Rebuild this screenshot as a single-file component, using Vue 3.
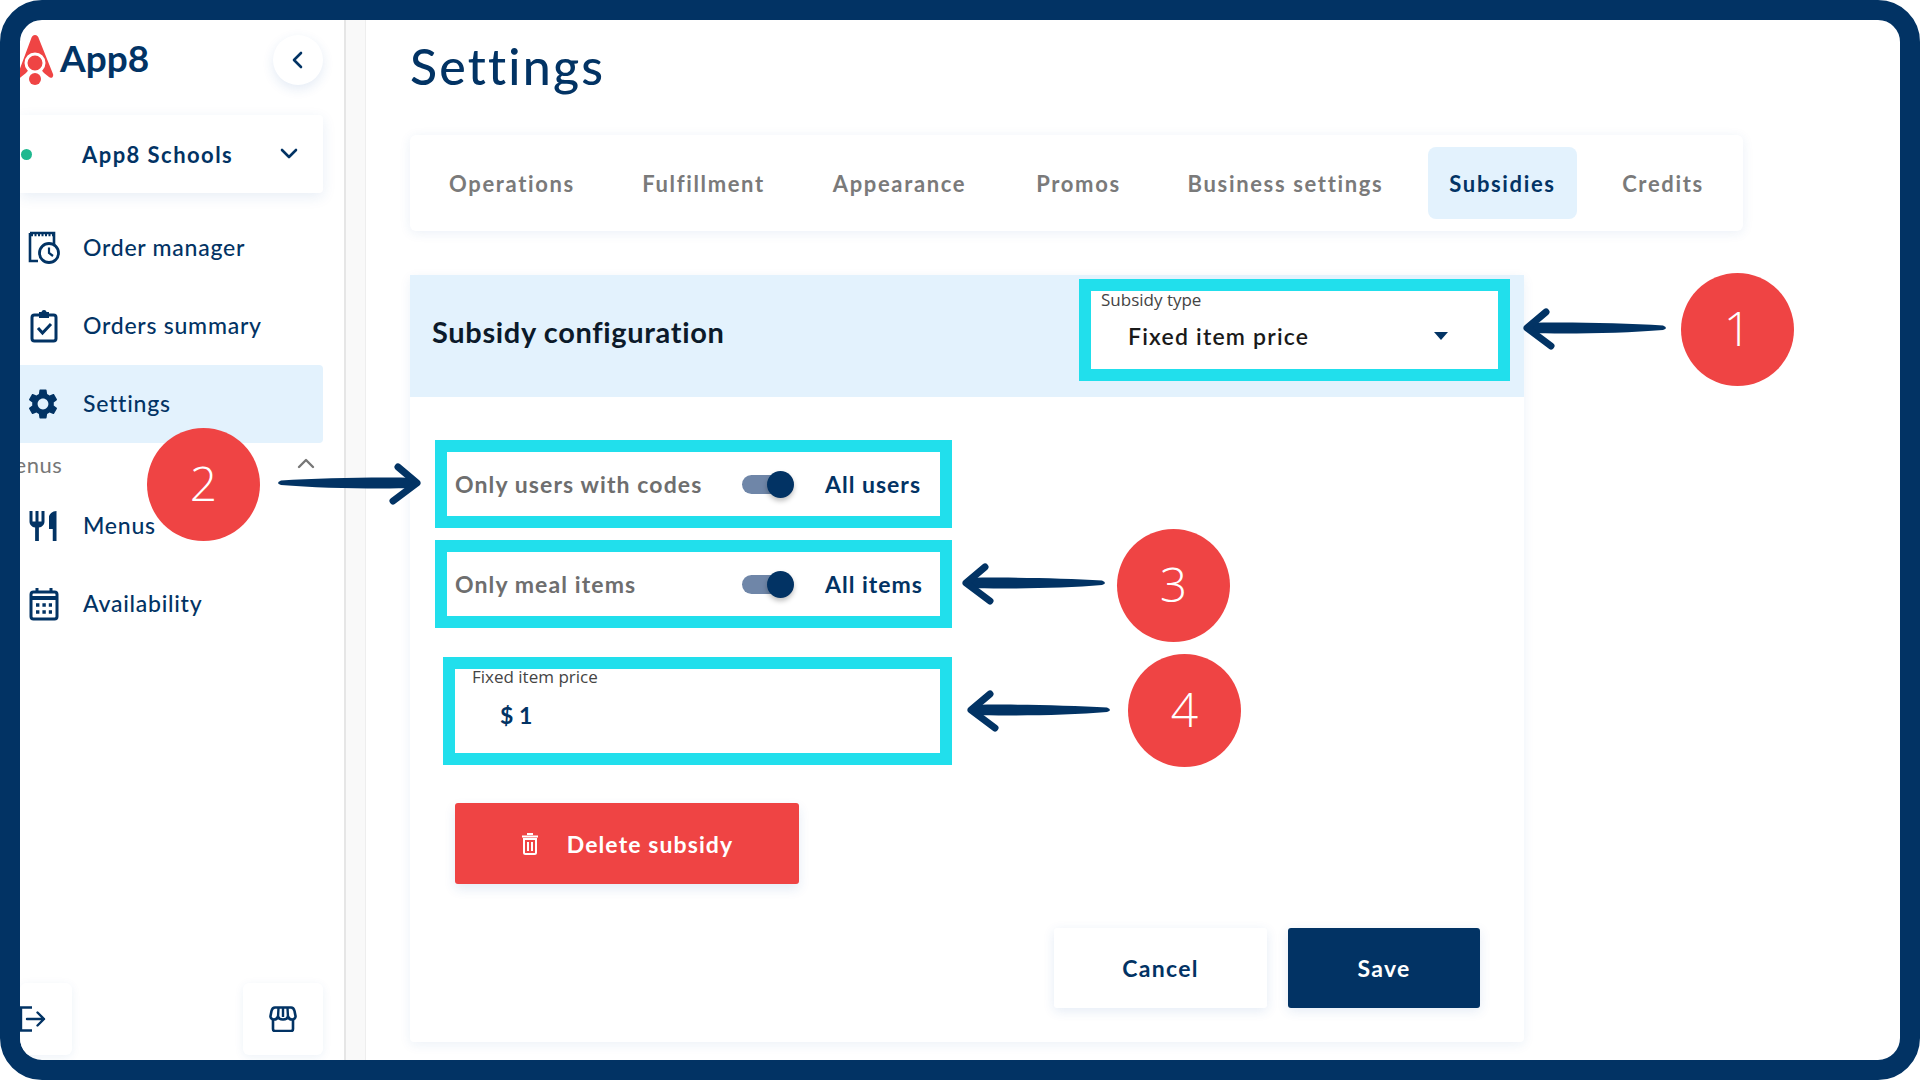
<script setup>
const tabs = [
  { label: 'Operations', w: 168 },
  { label: 'Fulfillment', w: 163 },
  { label: 'Appearance', w: 177 },
  { label: 'Promos', w: 129 },
  { label: 'Business settings', w: 233 },
  { label: 'Subsidies', w: 149, active: true },
  { label: 'Credits', w: 120 }
]
const marks = [
  { n: 1, x: 1681, y: 273 },
  { n: 2, x: 147, y: 428 },
  { n: 3, x: 1117, y: 529 },
  { n: 4, x: 1128, y: 654 }
]
const arrows = [
  { x: 1523, y: 308, flip: false },
  { x: 275, y: 463, flip: true },
  { x: 962, y: 563, flip: false },
  { x: 967, y: 690, flip: false }
]
</script>

<template>
  <div class="page">
    <div class="frame">
      <aside class="sidebar">
        <div class="brand-row">
          <div class="brand">
            <svg class="rocket" viewBox="0 0 34 50" width="34" height="50">
              <path d="M15 0 C17 0 18 1 19 4 L33 39 C34 42 31 44 29 42 L24 38 A11 11 0 0 0 6 38 L1 42 C-1 44 -3 42 -2 39 L11 4 C12 1 13 0 15 0 Z" fill="#ef4444" />
              <circle cx="15" cy="28" r="9" fill="#ef4444" stroke="#ffffff" stroke-width="3" />
              <circle cx="15" cy="44" r="6" fill="#ef4444" />
            </svg>
            <span class="brand-name">App8</span>
          </div>
          <button class="back">
            <svg viewBox="0 0 24 24" width="24" height="24"><path d="M15 5 L8 12 L15 19" fill="none" stroke="#023364" stroke-width="2.6" stroke-linecap="round" stroke-linejoin="round" /></svg>
          </button>
        </div>

        <div class="store">
          <span class="dot"></span>
          <span class="store-name">App8 Schools</span>
          <svg viewBox="0 0 24 24" width="24" height="24"><path d="M5 8 L12 15 L19 8" fill="none" stroke="#023364" stroke-width="2.6" stroke-linecap="round" stroke-linejoin="round" /></svg>
        </div>

        <nav class="nav">
          <a class="nav-item">
            <svg class="nav-icon" viewBox="0 0 32 34" width="32" height="34">
              <path d="M2 2 H26 V16 M2 2 V30 H10" fill="none" stroke="#023364" stroke-width="2.6" />
              <path d="M3 4 H25" stroke="#023364" stroke-width="2.6" stroke-dasharray="2 1.5" />
              <circle cx="21" cy="22" r="9.5" fill="#fff" stroke="#023364" stroke-width="2.8" />
              <path d="M21 16.5 V22 L25 25" fill="none" stroke="#023364" stroke-width="2.2" />
            </svg>
            <span>Order manager</span>
          </a>
          <a class="nav-item">
            <svg class="nav-icon" viewBox="0 0 32 34" width="32" height="34">
              <rect x="4" y="6" width="24" height="26" rx="2.5" fill="none" stroke="#023364" stroke-width="3" />
              <path d="M11 3 H21 V9 H11 Z" fill="#023364" />
              <circle cx="16" cy="3.5" r="2.5" fill="#023364" />
              <path d="M10 19 L14.5 24 L23 15" fill="none" stroke="#023364" stroke-width="3" />
            </svg>
            <span>Orders summary</span>
          </a>
          <a class="nav-item active">
            <svg class="nav-icon wide" viewBox="0 0 24 24" width="36" height="36">
              <path d="M19.14 12.94c.04-.3.06-.61.06-.94 0-.32-.02-.64-.07-.94l2.03-1.58c.18-.14.23-.41.12-.61l-1.92-3.32c-.12-.22-.37-.29-.59-.22l-2.39.96c-.5-.38-1.03-.7-1.62-.94l-.36-2.54c-.04-.24-.24-.41-.48-.41h-3.84c-.24 0-.43.17-.47.41l-.36 2.54c-.59.24-1.13.57-1.62.94l-2.39-.96c-.22-.08-.47 0-.59.22L2.74 8.87c-.12.21-.08.47.12.61l2.03 1.58c-.05.3-.09.63-.09.94s.02.64.07.94l-2.03 1.58c-.18.14-.23.41-.12.61l1.92 3.32c.12.22.37.29.59.22l2.39-.96c.5.38 1.03.7 1.62.94l.36 2.54c.05.24.24.41.48.41h3.84c.24 0 .44-.17.47-.41l.36-2.54c.59-.24 1.13-.56 1.62-.94l2.39.96c.22.08.47 0 .59-.22l1.92-3.32c.12-.22.07-.47-.12-.61l-2.01-1.58zM12 15.6c-1.98 0-3.6-1.62-3.6-3.6s1.62-3.6 3.6-3.6 3.6 1.62 3.6 3.6-1.62 3.6-3.6 3.6z" fill="#023364" />
            </svg>
            <span>Settings</span>
          </a>
          <div class="section">
            <span class="section-label">Menus</span>
            <svg viewBox="0 0 24 24" width="24" height="24"><path d="M5 15 L12 8 L19 15" fill="none" stroke="#777" stroke-width="2.4" stroke-linecap="round" stroke-linejoin="round" /></svg>
          </div>
          <a class="nav-item">
            <svg class="nav-icon wide" viewBox="0 0 24 24" width="36" height="36">
              <path d="M11 9H9V2H7v7H5V2H3v7c0 2.12 1.66 3.84 3.75 3.97V22h2.5v-9.03C11.34 12.84 13 11.12 13 9V2h-2v7zm5-3v8h2.5v8H21V2c-2.76 0-5 2.24-5 4z" fill="#023364" />
            </svg>
            <span>Menus</span>
          </a>
          <a class="nav-item">
            <svg class="nav-icon" viewBox="0 0 32 34" width="32" height="34">
              <rect x="3" y="5" width="26" height="27" rx="2.5" fill="none" stroke="#023364" stroke-width="3" />
              <path d="M3 11 H29" stroke="#023364" stroke-width="4" />
              <path d="M9 1 V6 M23 1 V6" stroke="#023364" stroke-width="3" />
              <path d="M8 18 H24 M8 25 H24" stroke="#023364" stroke-width="3.4" stroke-dasharray="3.4 3" />
            </svg>
            <span>Availability</span>
          </a>
        </nav>

        <div class="side-foot">
          <button class="foot-btn logout">
            <svg viewBox="0 0 26 26" width="26" height="26">
              <path d="M12 1.5 H1 V24.5 H12" fill="none" stroke="#023364" stroke-width="2.4" />
              <path d="M7 13 H24 M17.5 6.5 L24 13 L17.5 19.5" fill="none" stroke="#023364" stroke-width="2.4" stroke-linecap="round" stroke-linejoin="round" />
            </svg>
          </button>
          <button class="foot-btn shop">
            <svg viewBox="0 0 28 26" width="28" height="26">
              <path d="M4 14 V23 A2 2 0 0 0 6 25 H22 A2 2 0 0 0 24 23 V14" fill="none" stroke="#023364" stroke-width="2.6" />
              <path d="M6 1.5 H22 C24 1.5 25 3 25.5 5 L26.5 10 C26.8 12 25 13.5 23 13.5 C21 13.5 19.5 12 19 10.5 C18.5 12.5 16.5 13.5 14 13.5 C11.5 13.5 9.5 12.5 9 10.5 C8.5 12 7 13.5 5 13.5 C3 13.5 1.2 12 1.5 10 L2.5 5 C3 3 4 1.5 6 1.5 Z" fill="none" stroke="#023364" stroke-width="2.6" stroke-linejoin="round" />
              <path d="M9.5 2 L9 11 M14 2 V11 M18.5 2 L19 11" stroke="#023364" stroke-width="2.4" />
            </svg>
          </button>
        </div>
      </aside>

      <div class="gutter"></div>

      <main class="main">
        <h1 class="title">Settings</h1>

        <div class="tabs">
          <div
            v-for="t in tabs"
            :key="t.label"
            class="tab"
            :class="{ active: t.active }"
            :style="{ width: t.w + 'px' }"
          >{{ t.label }}</div>
        </div>

        <section class="panel">
          <header class="panel-head">
            <h2 class="panel-title">Subsidy configuration</h2>
            <div class="box select-box">
              <label class="float-label type-label">Subsidy type</label>
              <div class="select-row">
                <span>Fixed item price</span>
                <svg viewBox="0 0 14 8" width="14" height="8"><path d="M0 0 H14 L7 8 Z" fill="#023364" /></svg>
              </div>
            </div>
          </header>

          <div class="panel-body">
            <div class="box toggle-box">
              <span class="off-label">Only users with codes</span>
              <span class="switch"><span class="knob"></span></span>
              <span class="on-label">All users</span>
            </div>
            <div class="box toggle-box second">
              <span class="off-label">Only meal items</span>
              <span class="switch"><span class="knob"></span></span>
              <span class="on-label">All items</span>
            </div>
            <div class="box price-box">
              <label class="float-label price-label">Fixed item price</label>
              <div class="price-value">$ 1</div>
            </div>

            <button class="delete">
              <svg viewBox="0 0 18 22" width="18" height="22">
                <path d="M3 6 H15 V19.5 A1.5 1.5 0 0 1 13.5 21 H4.5 A1.5 1.5 0 0 1 3 19.5 Z" fill="none" stroke="#fff" stroke-width="2" />
                <path d="M1 3.5 H17 M6 1 H12 M7 9 V18 M11 9 V18" stroke="#fff" stroke-width="2" />
              </svg>
              <span>Delete subsidy</span>
            </button>

            <div class="actions">
              <button class="btn cancel">Cancel</button>
              <button class="btn save">Save</button>
            </div>
          </div>
        </section>
      </main>
    </div>

    <svg
      v-for="(a, i) in arrows"
      :key="'a' + i"
      class="arrow"
      :class="{ flip: a.flip }"
      :style="{ left: a.x + 'px', top: a.y + 'px' }"
      viewBox="0 0 146 42"
      width="146"
      height="42"
    >
      <path d="M6 15 C40 14 100 15 140 17.5 Q146 20 140 22 C100 25.5 40 26 6 25 Z" fill="#023364" />
      <path d="M23 4 L4 20 L28 38" fill="none" stroke="#023364" stroke-width="7" stroke-linecap="round" stroke-linejoin="round" />
    </svg>

    <div
      v-for="m in marks"
      :key="m.n"
      class="mark"
      :style="{ left: m.x + 'px', top: m.y + 'px' }"
    >{{ m.n }}</div>
  </div>
</template>

<style>
html, body { margin: 0; background: #ffffff; }
</style>

<style scoped>
.page {
  position: relative;
  width: 1920px;
  height: 1080px;
  overflow: hidden;
  background: #fff;
  font-family: "Lato", "Open Sans", sans-serif;
  color: #023364;
}
.frame {
  box-sizing: border-box;
  width: 1920px;
  height: 1080px;
  border: 20px solid #023364;
  border-radius: 42px;
  display: flex;
  overflow: hidden;
  background: #fff;
}
button { font-family: inherit; border: 0; cursor: pointer; padding: 0; }

.sidebar {
  width: 324px;
  flex: none;
  display: flex;
  flex-direction: column;
  padding-top: 15px;
  box-sizing: border-box;
}
.brand-row {
  display: flex;
  align-items: center;
  justify-content: space-between;
  height: 50px;
  padding-right: 21px;
}
.brand { display: flex; align-items: center; gap: 6px; }
.rocket { flex: none; }
.brand-name { font-size: 37px; font-weight: 700; line-height: 50px; margin-top: -5px; }
.back {
  width: 50px;
  height: 50px;
  border-radius: 50%;
  background: #fff;
  box-shadow: 0 4px 12px rgba(30, 90, 170, 0.12);
  display: flex;
  align-items: center;
  justify-content: center;
}
.store {
  width: 303px;
  height: 78px;
  margin-top: 30px;
  display: flex;
  align-items: center;
  background: #fff;
  box-shadow: 0 4px 14px rgba(30, 90, 170, 0.1);
  border-radius: 0 4px 4px 0;
  font-size: 22px;
  font-weight: 700;
  letter-spacing: 1.45px;
  box-sizing: border-box;
  padding-right: 22px;
}
.dot { width: 11px; height: 11px; border-radius: 50%; background: #1fb88f; margin-left: 1px; flex: none; }
.store-name { margin-left: 50px; flex: 1; }

.nav { margin-top: 16px; display: flex; flex-direction: column; }
.nav-item {
  width: 303px;
  height: 78px;
  display: flex;
  align-items: center;
  font-size: 23px;
  font-weight: 500;
  letter-spacing: 0.75px;
  position: relative;
  padding: 0 0 2px 63px;
  box-sizing: border-box;
  border-radius: 0 4px 4px 0;
}
.nav-item.active { background: #e3f2fd; }
.nav-icon { position: absolute; left: 8px; top: 50%; transform: translateY(-50%); }
.nav-icon.wide { left: 5px; }
.section {
  width: 303px;
  height: 44px;
  display: flex;
  align-items: center;
  justify-content: space-between;
  padding: 0 5px 2px 0;
  box-sizing: border-box;
  overflow: hidden;
  font-size: 22px;
  color: #777;
}
.section-label { margin-left: -26px; letter-spacing: 0.5px; }

.side-foot {
  margin-top: auto;
  margin-bottom: 5px;
  width: 303px;
  display: flex;
  justify-content: space-between;
}
.foot-btn {
  height: 72px;
  background: #fff;
  box-shadow: 0 2px 10px rgba(30, 90, 170, 0.08);
  border-radius: 6px;
  display: flex;
  align-items: center;
  justify-content: center;
}
.logout { width: 52px; justify-content: flex-start; }
.shop { width: 80px; }

.gutter {
  width: 22px;
  flex: none;
  box-sizing: border-box;
  background: #f9f9f9;
  border-left: 2px solid #e6e6e6;
  border-right: 1px solid #eeeeee;
}

.main { flex: 1; padding-left: 44px; box-sizing: border-box; min-width: 0; }
.title {
  margin: 0;
  height: 115px;
  box-sizing: border-box;
  padding-top: 18px;
  font-size: 50px;
  line-height: 56px;
  font-weight: 500;
  letter-spacing: 2.2px;
}
.tabs {
  width: 1333px;
  height: 96px;
  box-sizing: border-box;
  background: #fff;
  border-radius: 6px;
  box-shadow: 0 2px 12px rgba(30, 90, 170, 0.09);
  display: flex;
  align-items: center;
  gap: 26px;
  padding-left: 18px;
}
.tab {
  height: 72px;
  display: flex;
  align-items: center;
  justify-content: center;
  flex: none;
  border-radius: 8px;
  font-size: 22px;
  font-weight: 700;
  letter-spacing: 1.65px;
  color: #7a7a7a;
}
.tab.active { background: #e3f2fd; color: #023364; }

.panel {
  margin-top: 44px;
  width: 1114px;
  height: 767px;
  background: #fff;
  border-radius: 4px;
  box-shadow: 0 3px 12px rgba(30, 90, 170, 0.08);
}
.panel-head {
  height: 122px;
  background: #e3f2fd;
  display: flex;
  justify-content: space-between;
  align-items: flex-start;
  padding: 4px 14px 0 22px;
  box-sizing: border-box;
}
.panel-title {
  margin: 33px 0 0;
  font-size: 29px;
  line-height: 40px;
  font-weight: 700;
  color: #0c1a2a;
  letter-spacing: 0.65px;
}
.box {
  box-sizing: border-box;
  border: 12px solid #21dfec;
  background: #fff;
  position: relative;
}
.select-box { width: 431px; height: 102px; }
.float-label {
  display: block;
  font-family: "Open Sans", sans-serif;
  font-size: 17px;
  line-height: 18px;
  color: #444;
  font-weight: 500;
}
.type-label { margin-left: 10px; }
.select-row {
  display: flex;
  align-items: center;
  justify-content: space-between;
  margin-top: 12px;
  padding: 0 50px 0 37px;
  font-size: 23px;
  font-weight: 600;
  letter-spacing: 1.2px;
  color: #1a1a1a;
  line-height: 30px;
}

.panel-body { padding: 43px 44px 0 25px; display: flex; flex-direction: column; }
.toggle-box {
  width: 517px;
  height: 88px;
  display: flex;
  align-items: center;
  font-size: 23px;
  font-weight: 700;
  letter-spacing: 1.1px;
}
.second { margin-top: 12px; }
.off-label { color: #6e6e6e; margin-left: 8px; width: 287px; flex: none; white-space: nowrap; }
.switch {
  width: 48px;
  height: 19px;
  flex: none;
  border-radius: 10px;
  background: #6f86a8;
  position: relative;
  margin-right: 35px;
}
.knob {
  position: absolute;
  right: -4px;
  top: -4px;
  width: 27px;
  height: 27px;
  border-radius: 50%;
  background: #023364;
  box-shadow: 0 3px 5px rgba(0, 0, 0, 0.25);
}
.on-label { color: #023364; white-space: nowrap; letter-spacing: 1px; }
.price-box {
  width: 509px;
  height: 108px;
  margin: 29px 0 0 8px;
}
.price-label { margin-left: 17px; margin-top: -1px; }
.price-value {
  margin: 15px 0 0 45px;
  font-size: 23px;
  line-height: 28px;
  font-weight: 700;
}
.delete {
  margin: 38px 0 0 20px;
  width: 344px;
  height: 81px;
  background: #ef4444;
  color: #fff;
  border-radius: 3px;
  box-shadow: 0 5px 12px rgba(30, 90, 170, 0.12);
  display: flex;
  align-items: center;
  justify-content: center;
  gap: 28px;
  font-size: 23px;
  font-weight: 700;
  letter-spacing: 1.1px;
}
.actions { display: flex; justify-content: flex-end; gap: 21px; margin-top: 44px; }
.btn {
  height: 80px;
  border-radius: 3px;
  font-size: 23px;
  font-weight: 700;
  letter-spacing: 1.3px;
}
.cancel { width: 213px; background: #fff; color: #023364; box-shadow: 0 3px 12px rgba(30, 90, 170, 0.12); }
.save { width: 192px; background: #023364; color: #fff; box-shadow: 0 3px 12px rgba(30, 90, 170, 0.12); }

.arrow { position: absolute; }
.arrow.flip { transform: scaleX(-1); }
.mark {
  position: absolute;
  width: 113px;
  height: 113px;
  box-sizing: border-box;
  padding-bottom: 5px;
  border-radius: 50%;
  background: #ef4444;
  color: #fff;
  display: flex;
  align-items: center;
  justify-content: center;
  font-family: "Open Sans", sans-serif;
  font-size: 48px;
  font-weight: 300;
}
</style>
